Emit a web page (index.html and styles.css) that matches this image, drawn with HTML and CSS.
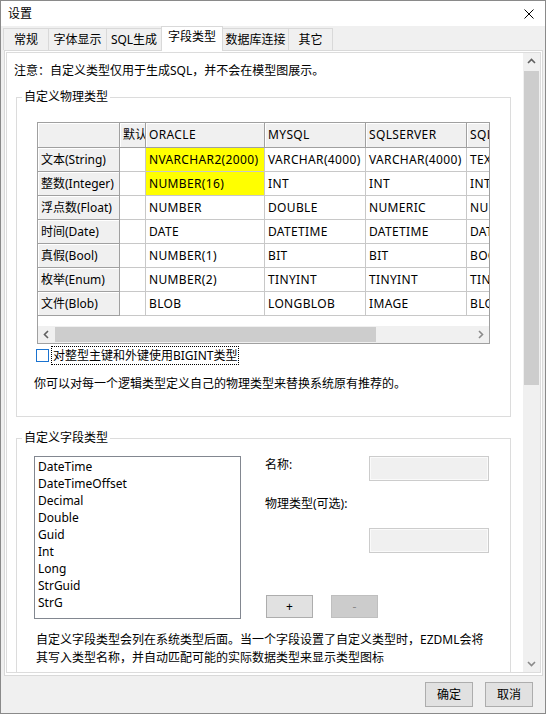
FILE: index.html
```html
<!DOCTYPE html>
<html lang="zh-CN">
<head>
<meta charset="utf-8">
<title>设置</title>
<link rel="stylesheet" href="styles.css">
</head>
<body>
<div class="window">
  <div class="titlebar">
    <span class="title">设置</span>
    <svg class="close" viewBox="0 0 10 10" width="10" height="10"><path d="M0.5 0.5 L9.5 9.5 M9.5 0.5 L0.5 9.5" stroke="#000" stroke-width="1" fill="none"/></svg>
  </div>
  <div class="tabs">
    <div class="tab t1">常规</div>
    <div class="tab t2">字体显示</div>
    <div class="tab t3">SQL生成</div>
    <div class="tab t4 active">字段类型</div>
    <div class="tab t5">数据库连接</div>
    <div class="tab t6">其它</div>
  </div>
  <div class="panel">
    <div class="scrollbox">
      <div class="content">
        <p class="note">注意：自定义类型仅用于生成SQL，并不会在模型图展示。</p>
        <fieldset class="group g1">
          <legend>自定义物理类型</legend>
          <div class="grid">
            <div class="grid-view">
              <div class="cells">
                <div class="c fx"></div><div class="c fx">默认</div><div class="c fx v">ORACLE</div><div class="c fx v">MYSQL</div><div class="c fx v">SQLSERVER</div><div class="c fx v">SQLITE</div>
                <div class="c fx">文本(String)</div><div class="c"></div><div class="c v hl">NVARCHAR2(2000)</div><div class="c v">VARCHAR(4000)</div><div class="c v">VARCHAR(4000)</div><div class="c v">TEXT</div>
                <div class="c fx">整数(Integer)</div><div class="c"></div><div class="c v hl">NUMBER(16)</div><div class="c v">INT</div><div class="c v">INT</div><div class="c v">INTEGER</div>
                <div class="c fx">浮点数(Float)</div><div class="c"></div><div class="c v">NUMBER</div><div class="c v">DOUBLE</div><div class="c v">NUMERIC</div><div class="c v">NUMERIC</div>
                <div class="c fx">时间(Date)</div><div class="c"></div><div class="c v">DATE</div><div class="c v">DATETIME</div><div class="c v">DATETIME</div><div class="c v">DATETIME</div>
                <div class="c fx">真假(Bool)</div><div class="c"></div><div class="c v">NUMBER(1)</div><div class="c v">BIT</div><div class="c v">BIT</div><div class="c v">BOOLEAN</div>
                <div class="c fx">枚举(Enum)</div><div class="c"></div><div class="c v">NUMBER(2)</div><div class="c v">TINYINT</div><div class="c v">TINYINT</div><div class="c v">TINYINT</div>
                <div class="c fx">文件(Blob)</div><div class="c"></div><div class="c v">BLOB</div><div class="c v">LONGBLOB</div><div class="c v">IMAGE</div><div class="c v">BLOB</div>
              </div>
            </div>
            <div class="hscroll">
              <div class="arrow"><svg viewBox="0 0 17 17" width="17" height="17"><polyline points="10,5 6.5,8.5 10,12" stroke="#606060" stroke-width="1.6" fill="none"/></svg></div>
              <div class="hthumb"></div>
              <div class="track"></div>
              <div class="arrow"><svg viewBox="0 0 17 17" width="17" height="17"><polyline points="7,5 10.5,8.5 7,12" stroke="#8a8a8a" stroke-width="1.6" fill="none"/></svg></div>
            </div>
          </div>
          <div class="check">
            <span class="box"></span>
            <span class="check-text">对整型主键和外键使用BIGINT类型</span>
          </div>
          <p class="hint">你可以对每一个逻辑类型定义自己的物理类型来替换系统原有推荐的。</p>
        </fieldset>
        <fieldset class="group g2">
          <legend>自定义字段类型</legend>
          <div class="fields">
            <div class="listbox">
              <div class="item">DateTime</div>
              <div class="item">DateTimeOffset</div>
              <div class="item">Decimal</div>
              <div class="item">Double</div>
              <div class="item">Guid</div>
              <div class="item">Int</div>
              <div class="item">Long</div>
              <div class="item">StrGuid</div>
              <div class="item">StrG</div>
            </div>
            <div class="editor">
              <div class="row1">
                <span class="lbl lbl1">名称:</span>
                <div class="input"></div>
              </div>
              <span class="lbl lbl2">物理类型(可选):</span>
              <div class="input input2"></div>
              <div class="btns">
                <button class="small">+</button>
                <button class="small disabled">-</button>
              </div>
            </div>
          </div>
          <p class="desc">自定义字段类型会列在系统类型后面。当一个字段设置了自定义类型时，EZDML会将<br>其写入类型名称，并自动匹配可能的实际数据类型来显示类型图标</p>
        </fieldset>
      </div>
      <div class="vscroll">
        <div class="arrow"><svg viewBox="0 0 17 17" width="17" height="17"><polyline points="5,10 8.5,6.5 12,10" stroke="#606060" stroke-width="1.6" fill="none"/></svg></div>
        <div class="vthumb"></div>
        <div class="track"></div>
        <div class="arrow"><svg viewBox="0 0 17 17" width="17" height="17"><polyline points="5,7 8.5,10.5 12,7" stroke="#8a8a8a" stroke-width="1.6" fill="none"/></svg></div>
      </div>
    </div>
  </div>
  <div class="footer">
    <button class="btn">确定</button>
    <button class="btn">取消</button>
  </div>
</div>
</body>
</html>
```

FILE: styles.css
```css
* { box-sizing: border-box; }
html, body { margin: 0; padding: 0; }
body {
  width: 546px;
  height: 714px;
  overflow: hidden;
  font-family: "Noto Sans", "Noto Sans CJK SC", sans-serif;
  font-size: 12px;
  color: #000;
  background: #f0f0f0;
}
p { margin: 0; }
button { font-family: inherit; font-size: 12px; color: #000; padding: 0; }

.window {
  width: 546px;
  height: 714px;
  border: 1px solid #8a8a8a;
  background: #f0f0f0;
  display: flex;
  flex-direction: column;
}

.titlebar {
  flex: none;
  height: 25px;
  background: #fff;
  display: flex;
  align-items: center;
  justify-content: space-between;
  padding: 0 11px 0 7px;
}
.title { line-height: 16px; }
.close { display: block; }

.tabs {
  flex: none;
  height: 24px;
  display: flex;
  align-items: flex-end;
  padding-left: 2px;
  position: relative;
  z-index: 1;
}
.tab {
  height: 22px;
  border: 1px solid #d9d9d9;
  border-bottom: none;
  background: #f0f0f0;
  display: flex;
  align-items: center;
  justify-content: center;
  line-height: 16px;
  margin-left: -1px;
  white-space: nowrap;
}
.tab.t1 { margin-left: 0; width: 46px; }
.tab.t2 { width: 59px; }
.tab.t3 { width: 56px; }
.tab.t4 { width: 62px; }
.tab.t5 { width: 67px; }
.tab.t6 { width: 45px; }
.tab.active {
  height: 25px;
  margin-bottom: -1px;
  padding-bottom: 4px;
  background: #fff;
  position: relative;
  z-index: 2;
}

.panel {
  flex: none;
  height: 626px;
  margin: 0 2px 0 3px;
  border: 1px solid #d9d9d9;
  background: #fff;
  padding: 1px 1px 2px 1px;
}
.scrollbox {
  height: 100%;
  border: 1px solid #dcdcdc;
  display: flex;
}
.content {
  flex: 1;
  min-width: 0;
  overflow: hidden;
}

.note {
  margin: 10px 0 0 7px;
  line-height: 16px;
  white-space: nowrap;
}

.group {
  margin: 10px 0 0 9px;
  width: 495px;
  min-width: 0;
  border: 1px solid #dcdcdc;
  padding: 0;
}
.group legend {
  padding: 0 2px;
  margin-left: 5px;
  line-height: 16px;
}
.g2 { margin-top: 13px; padding-bottom: 40px; }

.grid {
  margin: 17px 0 0 20px;
  width: 453px;
  height: 222px;
  border: 1px solid #a0a0a0;
  display: flex;
  flex-direction: column;
}
.grid-view {
  height: 203px;
  overflow: hidden;
  background: #fff;
}
.cells {
  display: grid;
  grid-template-columns: 82px 26px 119px 101px 101px 101px;
  grid-template-rows: 25px repeat(7, 24px);
  width: max-content;
}
.c {
  border-right: 1px solid #c8c8c8;
  border-bottom: 1px solid #c8c8c8;
  padding: 0 3px;
  line-height: 23px;
  white-space: nowrap;
  overflow: hidden;
}
.c.v { letter-spacing: 0.35px; }
.c.fx {
  background: #f0f0f0;
  border-right-color: #a0a0a0;
  border-bottom-color: #a0a0a0;
  box-shadow: inset 1px 1px 0 #ffffff;
}
.cells .c:nth-child(-n+6) { line-height: 24px; }
.c.hl { background: #ffff00; }

.hscroll {
  height: 17px;
  display: flex;
  background: #f0f0f0;
}
.arrow { width: 17px; height: 17px; flex: none; }
.arrow svg { display: block; }
.hthumb {
  width: 321px;
  margin: 1px 0;
  background: #cdcdcd;
}
.track { flex: 1; }

.check {
  display: flex;
  align-items: center;
  height: 19px;
  margin: 2px 0 0 19px;
}
.box {
  width: 13px;
  height: 13px;
  border: 1px solid #1a73d0;
  background: #fff;
  margin-right: 2px;
  flex: none;
}
.check-text {
  border: 1px dotted #000;
  padding: 0 1px;
  height: 19px;
  line-height: 17px;
  white-space: nowrap;
}

.hint {
  margin: 11px 0 24px 17px;
  line-height: 16px;
  white-space: nowrap;
}

.fields {
  display: flex;
  margin: 10px 0 0 17px;
}
.listbox {
  width: 207px;
  height: 163px;
  border: 1px solid #828790;
  background: #fff;
  padding: 1px 0 0 3px;
  flex: none;
}
.item { line-height: 17px; white-space: nowrap; }

.editor {
  margin-left: 24px;
  width: 224px;
  display: flex;
  flex-direction: column;
}
.row1 {
  display: flex;
  justify-content: space-between;
  align-items: flex-start;
}
.lbl { line-height: 16px; white-space: nowrap; }
.lbl1 { margin-top: 1px; }
.lbl2 { margin-top: 15px; }
.input {
  width: 120px;
  height: 25px;
  border: 1px solid #cccccc;
  background: #f0f0f0;
  box-shadow: inset 0 0 0 1px #fafafa;
}
.input2 { align-self: flex-end; margin-top: 16px; }
.btns {
  display: flex;
  gap: 18px;
  margin: 42px 0 0 1px;
}
.small {
  width: 47px;
  height: 23px;
  background: #e1e1e1;
  border: 1px solid #adadad;
  line-height: 20px;
}
.small.disabled {
  background: #cccccc;
  border-color: #bfbfbf;
  color: #8a8a8a;
}

.desc {
  margin: 12px 0 0 19px;
  line-height: 18px;
  white-space: nowrap;
}

.vscroll {
  width: 17px;
  flex: none;
  background: #f0f0f0;
  display: flex;
  flex-direction: column;
}
.vthumb {
  height: 314px;
  margin: 1px 1px 0 1px;
  background: #cdcdcd;
}

.footer {
  flex: 1;
  display: flex;
  justify-content: flex-end;
  align-items: flex-start;
  gap: 12px;
  padding: 6px 12px 0 0;
}
.btn {
  width: 48px;
  height: 25px;
  background: #e1e1e1;
  border: 1px solid #adadad;
  line-height: 22px;
}
```
